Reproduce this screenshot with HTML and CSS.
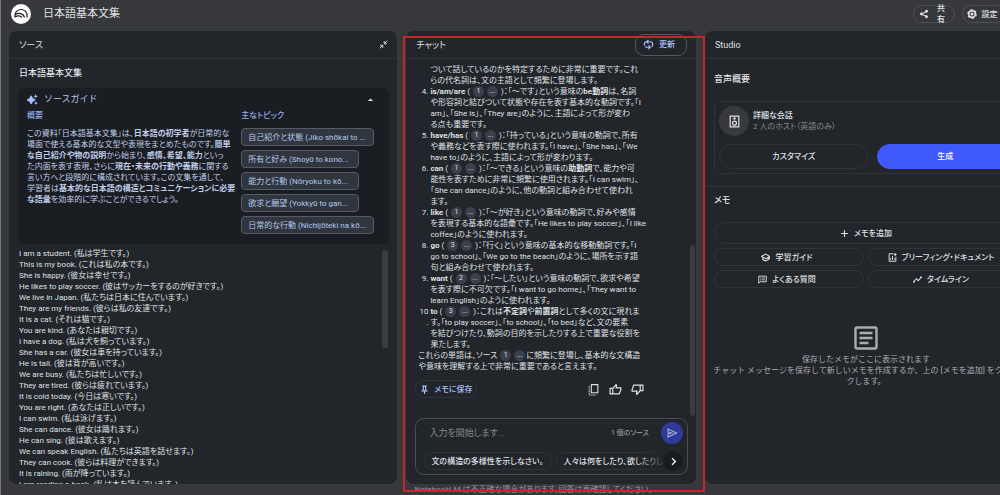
FILE: index.html
```html
<!DOCTYPE html>
<html lang="ja">
<head>
<meta charset="utf-8">
<meta name="viewport" content="width=device-width, initial-scale=1">
<title>日本語基本文集 - NotebookLM</title>
<link rel="stylesheet" href="styles.css">
</head>
<body>
<div class="app">
  <header class="topbar">
    <svg class="logo" viewBox="0 0 20 20"><circle cx="10" cy="10" r="10" fill="#fff"/><g fill="none" stroke="#1b1c1f" stroke-width="1.200"><path d="M4 13.500v-2.500a6 5.500 0 0 1 12 0v2.500"/><path d="M4.200 10.600c3.500-2.600 8.500-1.100 9.200 2.900"/><path d="M4.200 12.900c2.200-1.700 6-1.200 6.500.6"/></g></svg>
    <h1 class="topbar-title">日本語基本文集</h1>
    <button class="pill share"><svg viewBox="0 0 24 24"><path d="M18 6 6 12l12 6" fill="none" stroke="currentColor" stroke-width="2.500"/><g fill="currentColor"><circle cx="18" cy="5.500" r="3.500"/><circle cx="6" cy="12" r="3.500"/><circle cx="18" cy="18.500" r="3.500"/></g></svg><span>共<br>有</span></button>
    <button class="pill settings"><svg viewBox="0 0 24 24"><circle cx="12" cy="12" r="8" fill="none" stroke="currentColor" stroke-width="4"/><circle cx="12" cy="12" r="10" fill="none" stroke="currentColor" stroke-width="3" stroke-dasharray="5.300 5.170"/><circle cx="12" cy="12" r="3.600" fill="currentColor"/></svg><span>設定</span></button>
  </header>

  <main class="columns">
    <section class="panel source">
      <div class="panel-head"><h2>ソース</h2>
        <button class="icon-btn" aria-label="折りたたむ"><svg class="i9" viewBox="0 0 24 24"><path d="M22 2l-8 8M14 3v7h7M2 22l8-8M3 14h7v7" fill="none" stroke="currentColor" stroke-width="2.500"/></svg></button>
      </div>
      <div class="source-body">
        <h3 class="doc-title">日本語基本文集</h3>
        <div class="guide">
          <div class="guide-head">
            <svg class="i11" viewBox="0 0 24 24" fill="currentColor"><path d="M9 4q2 7 9 9-7 2-9 9-2-7-9-9 7-2 9-9z" stroke="currentColor" stroke-width="2"/><path d="M19 0l1.400 3.600L24 5l-3.600 1.400L19 10l-1.400-3.600L14 5l3.600-1.400z"/><path d="M19.500 16l1.200 2.800 2.800 1.200-2.800 1.200-1.200 2.800-1.200-2.800-2.800-1.200 2.800-1.200z"/></svg>
            <span>ソースガイド</span>
            <button class="icon-btn push" aria-label="閉じる"><svg class="i9" viewBox="0 0 24 24"><path d="M5 16l7-7 7 7z" fill="currentColor"/></svg></button>
          </div>
          <div class="guide-cols">
            <div class="summary">
              <h4>概要</h4>
              <p>この資料「日本語基本文集」は、<b>日本語の初学者</b>が日常的な<br>場面で使える基本的な文型や表現をまとめたものです。<b>簡単<br>な自己紹介や物の説明</b>から始まり、<b>感情、希望、能力</b>といっ<br>た内面を表す表現、さらに<b>現在・未来の行動や義務</b>に関する<br>言い方へと段階的に構成されています。この文集を通して、<br>学習者は<b>基本的な日本語の構造とコミュニケーションに必要<br>な語彙</b>を効率的に学ぶことができるでしょう。</p>
            </div>
            <div class="topics">
              <h4>主なトピック</h4>
              <button class="topic wide">自己紹介と状態 (Jiko shōkai to ...</button>
              <button class="topic">所有と好み (Shoyū to kono...</button>
              <button class="topic">能力と行動 (Nōryoku to kō...</button>
              <button class="topic">欲求と願望 (Yokkyū to gan...</button>
              <button class="topic wide">日常的な行動 (Nichijōteki na kō...</button>
            </div>
          </div>
        </div>
        <div class="sentences">
          <p>I am a student. (私は学生です。)</p>
          <p>This is my book. (これは私の本です。)</p>
          <p>She is happy. (彼女は幸せです。)</p>
          <p>He likes to play soccer. (彼はサッカーをするのが好きです。)</p>
          <p>We live in Japan. (私たちは日本に住んでいます。)</p>
          <p>They are my friends. (彼らは私の友達です。)</p>
          <p>It is a cat. (それは猫です。)</p>
          <p>You are kind. (あなたは親切です。)</p>
          <p>I have a dog. (私は犬を飼っています。)</p>
          <p>She has a car. (彼女は車を持っています。)</p>
          <p>He is tall. (彼は背が高いです。)</p>
          <p>We are busy. (私たちは忙しいです。)</p>
          <p>They are tired. (彼らは疲れています。)</p>
          <p>It is cold today. (今日は寒いです。)</p>
          <p>You are right. (あなたは正しいです。)</p>
          <p>I can swim. (私は泳げます。)</p>
          <p>She can dance. (彼女は踊れます。)</p>
          <p>He can sing. (彼は歌えます。)</p>
          <p>We can speak English. (私たちは英語を話せます。)</p>
          <p>They can cook. (彼らは料理ができます。)</p>
          <p>It is raining. (雨が降っています。)</p>
          <p>I am reading a book. (私は本を読んでいます。)</p>
          <div class="thumb"></div>
        </div>
      </div>
    </section>

    <div class="chat-col">
      <section class="panel chat">
        <div class="panel-head"><h2>チャット</h2>
          <button class="refresh"><svg class="i11" viewBox="0 0 24 24" fill="none" stroke="currentColor" stroke-width="2.600"><path d="M3 14V11a5 5 0 0 1 5-5h8a5 5 0 0 1 5 5v2a5 5 0 0 1-2 4"/><path d="M12 2L8 6l4 4M5 16a5 5 0 0 0 3 2h6M12 14l4 4-4 4"/></svg><span>更新</span></button>
        </div>
        <div class="messages">
          <ol class="answer">
            <li><span class="num"></span><p>ついて話しているのかを特定するために非常に重要です。これ<br>らの代名詞は、文の主語として頻繁に登場します。</p></li>
            <li><span class="num">4.</span><p><b>is/am/are</b> ( <button class="cite">1</button><button class="cite">...</button> )：「〜です」という意味の<b>be動詞</b>は、名詞<br>や形容詞と結びついて状態や存在を表す基本的な動詞です。「I<br>am」、「She is」、「They are」のように、主語によって形が変わ<br>る点も重要です。</p></li>
            <li><span class="num">5.</span><p><b>have/has</b> ( <button class="cite">1</button><button class="cite">...</button> )：「持っている」という意味の動詞で、所有<br>や義務などを表す際に使われます。「I have」、「She has」、「We<br>have to」のように、主語によって形が変わります。</p></li>
            <li><span class="num">6.</span><p><b>can</b> ( <button class="cite">1</button><button class="cite">...</button> )：「〜できる」という意味の<b>助動詞</b>で、能力や可<br>能性を表すために非常に頻繁に使用されます。「I can swim」、<br>「She can dance」のように、他の動詞と組み合わせて使われ<br>ます。</p></li>
            <li><span class="num">7.</span><p><b>like</b> ( <button class="cite">1</button><button class="cite">...</button> )：「〜が好き」という意味の動詞で、好みや感情<br>を表現する基本的な語彙です。「He likes to play soccer」、「I like<br>coffee」のように使われます。</p></li>
            <li><span class="num">8.</span><p><b>go</b> ( <button class="cite">3</button><button class="cite">...</button> )：「行く」という意味の基本的な移動動詞です。「I<br>go to school」、「We go to the beach」のように、場所を示す語<br>句と組み合わせて使われます。</p></li>
            <li><span class="num">9.</span><p><b>want</b> ( <button class="cite">2</button><button class="cite">...</button> )：「〜したい」という意味の動詞で、欲求や希望<br>を表す際に不可欠です。「I want to go home」、「They want to<br>learn English」のように使われます。</p></li>
            <li><span class="num">10<br>.</span><p><b>to</b> ( <button class="cite">3</button><button class="cite">...</button> )：これは<b>不定詞</b>や<b>前置詞</b>として多くの文に現れま<br>す。「to play soccer」、「to school」、「to bed」など、文の要素<br>を結びつけたり、動詞の目的を示したりする上で重要な役割を<br>果たします。</p></li>
          </ol>
          <p class="closing">これらの単語は、ソース <button class="cite">1</button><button class="cite">...</button>に頻繁に登場し、基本的な文構造<br>や意味を理解する上で非常に重要であると言えます。</p>
          <div class="actions">
            <button class="pill save"><svg class="i9" viewBox="0 0 24 24"><path d="M6 3h12M9 3v9l-3 3.500h12L15 12V3M12 15v9" fill="none" stroke="currentColor" stroke-width="3"/></svg><span>メモに保存</span></button>
            <button class="icon-btn push" aria-label="コピー"><svg class="i13" viewBox="0 0 24 24" fill="none" stroke="currentColor" stroke-width="2"><path d="M8 3h12v15H8z"/><path d="M4 6v16h13" stroke-dasharray="2.500 1.500"/></svg></button>
            <button class="icon-btn" aria-label="良い回答"><svg class="i13" viewBox="0 0 24 24" fill="none" stroke="currentColor" stroke-width="2.200"><path d="M7 10l6-7 1 1-1 5h9v3l-3 8H7zM7 10H2v10h5"/></svg></button>
            <button class="icon-btn" aria-label="良くない回答"><svg class="i13" viewBox="0 0 24 24" fill="none" stroke="currentColor" stroke-width="2.200"><path d="M17 14l-6 7-1-1 1-5H2v-3l3-8h12zM17 14h5V4h-5"/></svg></button>
          </div>
          <div class="thumb chat-thumb"></div>
        </div>
        <form class="composer">
          <div class="ask">
            <input type="text" aria-label="質問" placeholder="入力を開始します...">
            <span class="count">1 個のソース</span>
            <button type="button" class="send" aria-label="送信"><svg viewBox="0 0 24 24" fill="none" stroke="currentColor" stroke-width="2.400"><path d="M4 4l17 8-17 8v-6l7-2-7-2z"/></svg></button>
          </div>
          <div class="suggest">
            <button type="button" class="pill hint">文の構造の多様性を示しなさい。</button>
            <button type="button" class="pill hint">人々は何をしたり、欲したりし</button>
            <button type="button" class="next" aria-label="次へ"><svg class="i9" viewBox="0 0 24 24"><path d="M8 3l9 9-9 9" fill="none" stroke="currentColor" stroke-width="3.500"/></svg></button>
          </div>
        </form>
      </section>
      <p class="disclaimer">NotebookLM は不正確な場合があります。回答は再確認してください。</p>
      <div class="highlight"></div>
    </div>

    <section class="panel studio">
      <div class="panel-head"><h2>Studio</h2></div>
      <div class="audio">
        <h3>音声概要</h3>
        <div class="card">
          <div class="card-top">
            <span class="avatar"><svg viewBox="0 0 24 24" fill="none" stroke="currentColor" stroke-width="2.200"><path d="M4 2h16v20H4z"/><circle cx="12" cy="15" r="3.600"/><circle cx="12" cy="6.500" r="1.200"/></svg></span>
            <div><strong>詳細な会話</strong><p>2 人のホスト（英語のみ）</p></div>
          </div>
          <div class="card-btns">
            <button class="pill big">カスタマイズ</button>
            <button class="pill big primary">生成</button>
          </div>
        </div>
      </div>
      <div class="notes">
        <h3>メモ</h3>
        <button class="pill add"><svg class="i9" viewBox="0 0 24 24"><path d="M12 3v18M3 12h18" stroke="currentColor" stroke-width="3"/></svg>メモを追加</button>
        <div class="note-grid">
          <button class="pill"><svg class="i9" viewBox="0 0 24 24" fill="none" stroke="currentColor" stroke-width="3"><path d="M1 9l11-6 11 6-11 6zM5 12v6l7 3 7-3v-6M22 9v8"/></svg>学習ガイド</button>
          <button class="pill"><svg class="i9" viewBox="0 0 24 24" fill="none" stroke="currentColor" stroke-width="2.600"><path d="M14 2H3v20h18V10M7 18v-5M12 18V8M17 18v-4M19 0v8M15 4h8"/></svg>ブリーフィング・ドキュメント</button>
          <button class="pill"><svg class="i9" viewBox="0 0 24 24" fill="none" stroke="currentColor" stroke-width="2.400"><path d="M2 3h20v15H6l-4 4zM6 8h3M11 8h7M6 13h3M11 13h7"/></svg>よくある質問</button>
          <button class="pill"><svg class="i9" viewBox="0 0 24 24" fill="none" stroke="currentColor" stroke-width="2.800"><path d="M2 18l7-8 5 5 8-9"/><circle cx="2.500" cy="18" r="1"/><circle cx="21.500" cy="6" r="1"/></svg>タイムライン</button>
        </div>
        <div class="empty">
          <svg viewBox="0 0 24 24" fill="none" stroke="currentColor" stroke-width="2.400"><rect x="1.500" y="1.500" width="21" height="21" rx="1.500"/><path d="M5.500 7h13M5.500 12h13M5.500 17h9"/></svg>
          <p>保存したメモがここに表示されます<br>チャット メッセージを保存して新しいメモを作成するか、上の [メモを追加] をクリッ<br>クします。</p>
        </div>
      </div>
    </section>
  </main>
</div>
</body>
</html>
```

FILE: styles.css
```css
* { box-sizing: border-box; }
body, h1, h2, h3, h4, p, ol { margin: 0; padding: 0; }
body {
  background: #37383b;
  color: #dfe1e5;
  font: 8px/11px Roboto, "Noto Sans CJK JP", sans-serif;
  font-feature-settings: "palt";
  overflow: hidden;
}
button, input { font: inherit; font-feature-settings: inherit; color: inherit; background: none; border: 0; padding: 0; margin: 0; }
button { white-space: nowrap; }
svg { display: block; flex: none; }
.i9 { width: 9px; height: 9px; }
.i11 { width: 11px; height: 11px; }
.i13 { width: 13px; height: 13px; }
.push { margin-left: auto; }

.app { height: 100vh; display: flex; flex-direction: column; border-left: 1px solid #77787a; }
.topbar { height: 31px; flex: none; display: flex; align-items: center; padding: 0 0 3px 10px; margin-right: -6px; }
.logo { width: 20px; height: 20px; }
.topbar-title { font-size: 11px; line-height: 16px; font-weight: 400; margin: 0 auto 0 12px; font-feature-settings: normal; }
.pill { display: flex; align-items: center; justify-content: center; gap: 5px; border: 1px solid #303338; border-radius: 13px; font-weight: 500; height: 18px; }
.share, .settings { border-color: #4c4e52; }
.share svg, .settings svg { width: 10px; height: 10px; }
.share { width: 42px; gap: 8px; margin-right: 7px; padding-right: 4px; }
.settings { width: 44px; padding-right: 4px; }

.columns { flex: 1; min-height: 0; display: flex; gap: 9px; padding-left: 8px; margin-right: -27px; }
.panel { background: #22252a; border-radius: 8px; overflow: hidden; display: flex; flex-direction: column; }
.source { flex: 389 1 0; margin-bottom: 11px; min-width: 0; }
.studio { flex: 0 0 322px; margin-bottom: 11px; }
.panel-head { height: 28px; flex: none; display: flex; align-items: center; justify-content: space-between; padding: 0 9px 0 10px; border-bottom: 1px solid #303338; }
h2, h3 { font-size: 9px; line-height: 12px; font-weight: 500; }
h2 { font-weight: 400; }

.source-body { flex: 1; min-height: 0; display: flex; flex-direction: column; padding: 8px 8px 0 9px; }
.doc-title { padding-left: 1px; margin-bottom: 9px; font-feature-settings: normal; }
.guide { flex: none; background: #1a1d21; border-radius: 6px; padding: 5px 14px 10px 9px; color: #b5c6ee; }
.guide-head { display: flex; align-items: center; gap: 6px; font-size: 9px; line-height: 12px; font-feature-settings: normal; }
.guide-head svg { color: #a8c0fa; }
.guide-head .icon-btn svg { color: #dfe1e5; }
.guide-cols { display: flex; gap: 6px; margin-top: 5px; }
.summary { flex: 208 1 0; white-space: nowrap; }
.topics { flex: 134 1 0; display: flex; flex-direction: column; align-items: flex-start; gap: 4px; }
h4 { font-size: 8px; line-height: 11px; font-weight: 500; color: #93aeea; }
.summary h4 { margin-bottom: 7px; }
.topics h4 { margin-bottom: 3px; }
.summary p { color: #c0cdea; }
.topic { height: 18px; width: 118px; padding: 0 6px; text-align: left; background: #30363e; border: 1px solid #555b64; border-radius: 4px; overflow: hidden; }
.topic.wide { width: 133px; }
.sentences { position: relative; flex: 1; min-height: 0; overflow: hidden; padding: 4px 0 0 1px; }
.thumb { position: absolute; top: 6px; right: 1px; width: 6px; height: 98px; border-radius: 3px; background: #393c41; }

.chat-col { flex: 290 1 0; min-width: 0; position: relative; display: flex; flex-direction: column; }
.chat { flex: 1; min-height: 0; }
.refresh { display: flex; align-items: center; justify-content: center; gap: 5px; width: 52px; height: 22px; padding-right: 4px; border: 1px solid #54575c; border-radius: 9px; color: #a8c0fa; font-weight: 500; }
.messages { position: relative; flex: 1; min-height: 0; padding: 5px 12px 0; white-space: nowrap; }
.answer { list-style: none; }
.answer li { display: grid; grid-template-columns: 10px 1fr; gap: 2px; }
.num { text-align: right; display: flex; justify-content: flex-end; }
.cite { display: inline-block; vertical-align: top; min-width: 11px; height: 11px; line-height: 11px; border-radius: 6px; background: #3c3f4c; text-align: center; font-size: 7px; margin: 0 1px; }
.cite + .cite { margin-left: 2px; }
.actions { display: flex; align-items: center; gap: 9px; margin: 8px 40px 0 -3px; }
.save { width: 62px; color: #a8c0fa; }
.chat-thumb { top: auto; bottom: 2px; width: 5px; height: 171px; }
.composer { flex: none; margin: 0 8px 9px 9px; border: 1px solid #4a4d52; border-radius: 9px; padding: 3px 4px 3px 8px; }
.ask { display: flex; align-items: center; gap: 12px; }
.ask input { flex: 1; min-width: 0; font-size: 9px; line-height: 14px; padding-left: 5px; outline: 0; }
.ask input::placeholder { color: #85888d; }
.count { font-size: 7px; color: #a9acb1; }
.send { width: 22px; height: 22px; border-radius: 50%; background: #303b99; color: #a3a9d6; display: flex; align-items: center; justify-content: center; }
.send svg { width: 12px; height: 12px; }
.suggest { position: relative; display: flex; gap: 4px; margin-top: 7px; height: 20px; align-items: center; overflow: hidden; }
.hint { flex: none; padding: 0 6px; width: 128px; justify-content: flex-start; font-weight: 500; }
.hint + .hint { width: 160px; }
.suggest::after { content: ""; position: absolute; top: 0; right: 0; width: 50px; height: 20px; background: linear-gradient(90deg, #22252a00, #22252a 70%); }
.next { position: absolute; z-index: 1; right: 0; top: 0; width: 20px; height: 20px; border-radius: 50%; background: #191b1f; display: flex; align-items: center; justify-content: center; color: #fff; }
.disclaimer { height: 11px; flex: none; padding-left: 8px; color: #96989c; white-space: nowrap; overflow: hidden; }
.highlight { position: absolute; top: 5px; bottom: 3px; left: -3px; right: -9px; border: 2px solid #c6262b; pointer-events: none; }

.audio { padding: 14px 9px 12px; border-bottom: 1px solid #303338; }
.card { margin-top: 16px; border: 1px solid #303338; border-radius: 7px; padding: 4px; }
.card-top { display: flex; align-items: center; gap: 4px; }
.avatar { width: 30px; height: 30px; border-radius: 50%; background: #37393c; display: flex; align-items: center; justify-content: center; }
.avatar svg { width: 13px; height: 13px; }
.card-top strong { font-weight: 500; display: block; }
.card-top p { color: #85888d; }
.card-btns { display: grid; grid-template-columns: 150fr 136fr; gap: 9px; margin-top: 8px; }
.big { height: 25px; }
.primary { background: #4059fb; border-color: #4059fb; color: #fff; }
.notes { padding: 7px 9px 0; }
.add { width: 100%; height: 22px; margin: 16px 0 4px; }
.note-grid { display: grid; grid-template-columns: 1fr 1fr; gap: 4px; }
.note-grid .pill { padding: 0 8px 0 4px; }
.empty { margin-top: 38px; display: flex; flex-direction: column; align-items: center; color: #a9acb1; text-align: center; gap: 4px; white-space: nowrap; font-feature-settings: normal; }
.empty svg { width: 24px; height: 24px; }
```
